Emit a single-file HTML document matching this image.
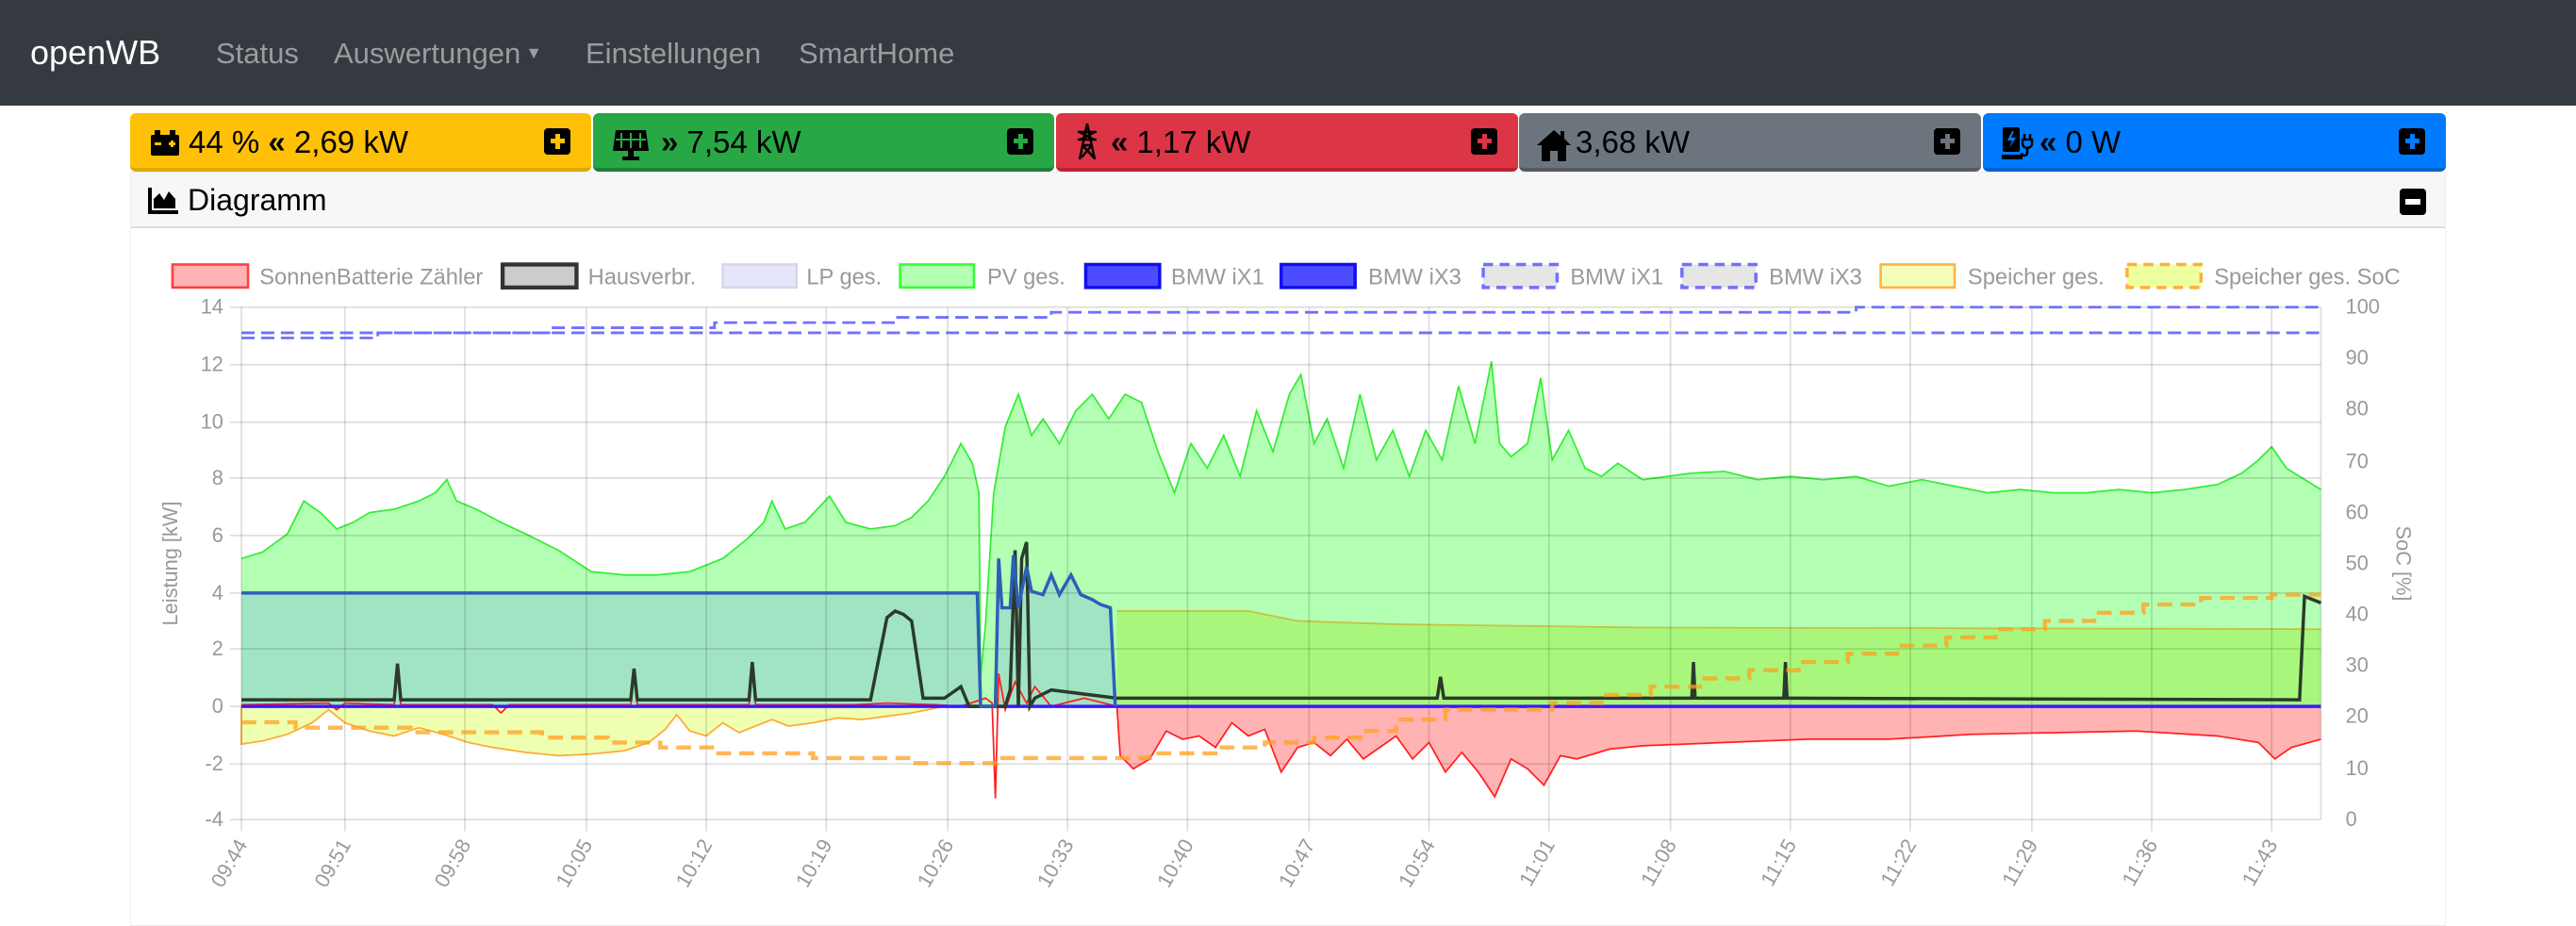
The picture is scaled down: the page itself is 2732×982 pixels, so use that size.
<!DOCTYPE html>
<html><head><meta charset="utf-8"><style>
*{margin:0;padding:0;box-sizing:border-box}
body{width:2732px;height:970px;background:#fff;font-family:"Liberation Sans",sans-serif;position:relative;overflow:hidden}
.nav{position:absolute;left:0;top:0;width:2732px;height:112px;background:#343a40}
.brand{position:absolute;left:32px;top:35px;color:#fff;font-size:36px}
.nl{position:absolute;top:39px;color:#9a9da0;font-size:31px}
.box{position:absolute;top:120px;height:62px;border-radius:6px;font-size:33px;color:#000;}
.box .t{position:absolute;left:62px;top:12px;white-space:nowrap}
.box .ic{position:absolute;left:20px;top:16px}
.box .pl{position:absolute;right:22px;top:16px;width:28px;height:28px;background:#000;border-radius:4px}
.pl:before{content:"";position:absolute;left:12px;top:6px;width:5px;height:16px;background:var(--c)}
.pl:after{content:"";position:absolute;left:7px;top:11px;width:15px;height:5px;background:var(--c)}
.card{position:absolute;left:138px;top:182px;width:2456px;height:800px;border:1px solid #eee}
.hdr{position:absolute;left:0;top:0;width:100%;height:59px;background:#f7f7f9;border-bottom:2px solid #ddd}
.hdr .t{position:absolute;left:60px;top:11px;font-size:32px;color:#000}
</style></head><body>
<div class="nav">
<div class="brand">openWB</div>
<div class="nl" style="left:229px">Status</div>
<div class="nl" style="left:354px">Auswertungen<span style="font-size:18px;vertical-align:5px"> ▼</span></div>
<div class="nl" style="left:621px">Einstellungen</div>
<div class="nl" style="left:847px">SmartHome</div>
</div>

<div class="box" style="left:138px;width:489px;background:#ffc107;border-bottom:4px solid #e0a800">
<svg class="ic" width="34" height="30" viewBox="0 0 34 30"><rect x="2" y="7" width="30" height="22" rx="2"/><rect x="6" y="2" width="6" height="6"/><rect x="22" y="2" width="6" height="6"/><rect x="6" y="15" width="7" height="3" fill="#ffc107"/><rect x="21" y="15" width="7" height="3" fill="#ffc107"/><rect x="23" y="13" width="3" height="7" fill="#ffc107"/></svg>
<div class="t">44 % <b>«</b> 2,69 kW</div><div class="pl" style="--c:#ffc107"></div></div>

<div class="box" style="left:629px;width:489px;background:#28a745;border-bottom:4px solid #1e7e34">
<svg class="ic" width="40" height="36" viewBox="0 0 40 36"><path d="M4 2h32l3 22H1z"/><path d="M10 5v16M20 5v16M30 5v16M4 12h32" stroke="#28a745" stroke-width="2"/><rect x="17" y="24" width="6" height="6"/><rect x="11" y="30" width="18" height="4"/></svg>
<div class="t" style="left:72px"><b>»</b> 7,54 kW</div><div class="pl" style="--c:#28a745"></div></div>

<div class="box" style="left:1120px;width:490px;background:#dc3545;border-bottom:4px solid #bd2130">
<svg class="ic" width="26" height="40" viewBox="0 0 26 40" style="top:10px"><path d="M13 1L5 39M13 1l8 38M3 10h20M3 18h20M7 24h12M5 10l15 8M21 10L6 18M8 24l12 13M18 24L7 37" stroke="#000" stroke-width="2.5" fill="none"/></svg>
<div class="t" style="left:58px"><b>«</b> 1,17 kW</div><div class="pl" style="--c:#dc3545"></div></div>

<div class="box" style="left:1611px;width:490px;background:#6c757d;border-bottom:4px solid #545b62">
<svg class="ic" width="38" height="36" viewBox="0 0 38 36" style="left:18px"><path d="M19 2L1 18h5v17h9V24h8v11h9V18h5L30 11V3h-4v5z"/></svg>
<div class="t" style="left:60px">3,68 kW</div><div class="pl" style="--c:#6c757d"></div></div>

<div class="box" style="left:2103px;width:491px;background:#007bff;border-bottom:4px solid #0062cc">
<svg class="ic" width="36" height="36" viewBox="0 0 36 36" style="left:20px;top:14px"><rect x="1" y="1" width="18" height="26" rx="2"/><rect x="0" y="30" width="22" height="5"/><path d="M11 5l-5 10h5l-3 8 7-11h-5l3-7z" fill="#007bff"/><path d="M24 8v6M30 8v6M22 14h10v4a5 5 0 0 1-10 0zM27 22v6a3 3 0 0 1-6 0" stroke="#000" stroke-width="2.5" fill="none"/></svg>
<div class="t" style="left:60px"><b>«</b> 0 W</div><div class="pl" style="--c:#007bff"></div></div>

<div class="card">
<div class="hdr">
<svg style="position:absolute;left:18px;top:16px" width="32" height="28" viewBox="0 0 32 28"><path d="M0 0h4v24h28v4H0z"/><path d="M6 22V12l6-6 5 7 5-9 7 8v10z"/></svg>
<div class="t">Diagramm</div>
<div style="position:absolute;right:20px;top:17px;width:28px;height:28px;background:#000;border-radius:4px"><div style="position:absolute;left:6px;top:11px;width:16px;height:6px;background:#fff"></div></div>
</div>
</div>

<svg style="position:absolute;left:0;top:0" width="2732" height="970" viewBox="0 0 1568.3 556.8" font-family="Liberation Sans, sans-serif">
<polygon fill="#b3ffb3" points="147,430 147,340 160,336 175,325 185,305 195,312 205,322 215,318 225,312 240,310 255,305 265,300 272,292 278,305 290,310 305,318 320,325 340,335 360,348 380,350 400,350 420,348 440,340 455,328 465,318 470,305 478,322 490,318 505,302 515,318 530,322 545,320 555,315 565,305 575,290 585,270 592,282 596,300 597,412 600,380 605,300 612,260 620,240 628,265 635,255 645,270 655,250 665,240 675,255 685,240 695,245 705,275 715,300 725,270 735,285 745,265 755,290 765,250 775,275 785,240 792,228 800,270 808,255 818,285 828,240 838,280 848,262 858,290 868,262 878,280 888,235 898,270 908,220 913,270 920,278 930,270 938,230 945,280 955,262 965,285 975,290 985,282 1000,292 1015,290 1030,288 1050,287 1070,292 1090,290 1110,292 1130,290 1150,296 1170,292 1190,296 1210,300 1230,298 1250,300 1270,300 1290,298 1310,300 1330,298 1350,295 1365,288 1375,280 1383,272 1392,285 1400,290 1413,298 1413,430"/>
<polyline fill="none" stroke="#33ee33" stroke-width="1" points="147,340 160,336 175,325 185,305 195,312 205,322 215,318 225,312 240,310 255,305 265,300 272,292 278,305 290,310 305,318 320,325 340,335 360,348 380,350 400,350 420,348 440,340 455,328 465,318 470,305 478,322 490,318 505,302 515,318 530,322 545,320 555,315 565,305 575,290 585,270 592,282 596,300 597,412 600,380 605,300 612,260 620,240 628,265 635,255 645,270 655,250 665,240 675,255 685,240 695,245 705,275 715,300 725,270 735,285 745,265 755,290 765,250 775,275 785,240 792,228 800,270 808,255 818,285 828,240 838,280 848,262 858,290 868,262 878,280 888,235 898,270 908,220 913,270 920,278 930,270 938,230 945,280 955,262 965,285 975,290 985,282 1000,292 1015,290 1030,288 1050,287 1070,292 1090,290 1110,292 1130,290 1150,296 1170,292 1190,296 1210,300 1230,298 1250,300 1270,300 1290,298 1310,300 1330,298 1350,295 1365,288 1375,280 1383,272 1392,285 1400,290 1413,298"/>
<polygon fill="#a1e4c4" points="147,430 147,361 595,361 597,430 606,430 608,340 610,370 615,370 617,338 620,370 625,345 628,360 635,362 640,350 645,362 652,350 658,362 665,365 670,368 676,370 679,430"/>
<polygon fill="#a8f77c" points="680,430 680,372 760,372 790,378 850,380 1000,382 1413,383 1413,430"/>
<polyline fill="none" stroke="#c8c040" stroke-width="1" points="680,372 760,372 790,378 850,380 1000,382 1413,383"/>
<polygon fill="#eeffb0" stroke="#ffaa33" stroke-width="1" points="147,430 147,453 160,451 175,447 190,440 200,432 210,440 225,445 240,448 255,443 270,447 285,452 300,455 320,458 340,460 360,459 380,457 395,452 405,444 412,435 420,445 430,448 440,440 450,446 460,442 470,438 480,442 495,440 510,437 525,438 540,436 555,434 570,431 575,430"/>
<polygon fill="#ffb3b3" points="680,430 682,460 690,468 700,462 710,445 720,450 730,448 740,455 750,440 760,448 770,444 780,470 790,455 800,452 810,460 820,450 830,462 840,455 850,448 860,462 870,452 880,470 890,458 900,470 910,485 920,462 930,468 940,478 950,460 960,462 980,456 1000,454 1050,452 1100,450 1150,450 1200,447 1250,446 1300,445 1350,448 1375,452 1385,462 1395,455 1413,450 1413,430"/>
<g stroke="rgba(0,0,0,0.13)" stroke-width="1">
<path d="M140 187H1413M140 222H1413M140 257H1413M140 291H1413M140 326H1413M140 361H1413M140 395H1413M140 430H1413M140 465H1413M140 499H1413"/>
<path d="M147 187V506M210 187V506M283 187V506M357 187V506M430 187V506M503 187V506M577 187V506M650 187V506M723 187V506M797 187V506M870 187V506M943 187V506M1017 187V506M1090 187V506M1163 187V506M1237 187V506M1310 187V506M1383 187V506M1413 187V499"/>
</g>
<polyline fill="none" stroke="#ff2020" stroke-width="1" points="147,429 200,428 205,432 210,428 240,429 242,404 244,429 300,429 305,434 310,429 384,429 386,407 388,429 456,429 458,403 460,429 520,429 540,428 570,429 585,430 600,425 604,428 606,486 608,410 612,432 618,415 625,428 630,418 640,430 660,425 680,430 682,460 690,468 700,462 710,445 720,450 730,448 740,455 750,440 760,448 770,444 780,470 790,455 800,452 810,460 820,450 830,462 840,455 850,448 860,462 870,452 880,470 890,458 900,470 910,485 920,462 930,468 940,478 950,460 960,462 980,456 1000,454 1050,452 1100,450 1150,450 1200,447 1250,446 1300,445 1350,448 1375,452 1385,462 1395,455 1413,450"/>
<line x1="147" y1="430" x2="1413" y2="430" stroke="#3a1aff" stroke-width="2"/>
<polyline fill="none" stroke="#2b3a2b" stroke-width="2" points="147,426 240,426 242,404 244,426 384,426 386,407 388,426 456,426 458,403 460,426 530,426 540,376 545,372 550,374 555,378 562,425 575,425 585,418 590,430 612,430 615,420 618,335 620,430 622,340 625,330 627,430 630,425 640,420 680,425 875,425 877,412 879,425 1030,425 1031,403 1032,425 1086,425 1087,403 1088,425 1400,426 1403,363 1413,367"/>
<polyline fill="none" stroke="#2c5fb8" stroke-width="2" points="147,361 595,361 597,430 606,430 608,340 610,370 615,370 617,338 620,370 625,345 628,360 635,362 640,350 645,362 652,350 658,362 665,365 670,368 676,370 679,430"/>
<g fill="none" stroke="#7070ff" stroke-width="1.6" stroke-dasharray="8 4">
<path d="M147 202.6H335V199.5H435V196.4H545V193.2H640V190.1H1130V187H1413"/>
<path d="M147 205.7H230V202.6H1413"/>
</g>
<path fill="none" stroke="rgba(255,160,30,0.75)" stroke-width="2.5" stroke-dasharray="9 5" d="M147 439.7H180V443H250V445.8H330V449H370V452H402V455H435V458.6H495V461.5H555V464.6H607V461.5H700V458.6H740V455H770V452H800V449H830V445H850V438H880V432H945V428H975V423H1005V418H1035V413H1065V408H1095V403H1125V398H1155V393H1185V388H1215V383H1245V378H1275V373H1305V368H1340V364H1383V362H1413"/>
<g fill="#999" font-size="12.5" text-anchor="end">
<text x="136" y="191">14</text><text x="136" y="226">12</text><text x="136" y="261">10</text><text x="136" y="295">8</text><text x="136" y="330">6</text><text x="136" y="365">4</text><text x="136" y="399">2</text><text x="136" y="434">0</text><text x="136" y="469">-2</text><text x="136" y="503">-4</text>
</g>
<g fill="#999" font-size="12.5">
<text x="1428" y="191">100</text><text x="1428" y="222">90</text><text x="1428" y="253">80</text><text x="1428" y="285">70</text><text x="1428" y="316">60</text><text x="1428" y="347">50</text><text x="1428" y="378">40</text><text x="1428" y="409">30</text><text x="1428" y="440">20</text><text x="1428" y="472">10</text><text x="1428" y="503">0</text>
</g>
<text transform="translate(108,343) rotate(-90)" fill="#999" font-size="12.5" text-anchor="middle">Leistung [kW]</text>
<text transform="translate(1459,343) rotate(90)" fill="#999" font-size="12.5" text-anchor="middle">SoC [%]</text>
<g fill="#999" font-size="12.5" text-anchor="end">
<text transform="translate(151,514) rotate(-60)">09:44</text><text transform="translate(214,514) rotate(-60)">09:51</text><text transform="translate(287,514) rotate(-60)">09:58</text><text transform="translate(361,514) rotate(-60)">10:05</text><text transform="translate(434,514) rotate(-60)">10:12</text><text transform="translate(507,514) rotate(-60)">10:19</text><text transform="translate(581,514) rotate(-60)">10:26</text><text transform="translate(654,514) rotate(-60)">10:33</text><text transform="translate(727,514) rotate(-60)">10:40</text><text transform="translate(801,514) rotate(-60)">10:47</text><text transform="translate(874,514) rotate(-60)">10:54</text><text transform="translate(947,514) rotate(-60)">11:01</text><text transform="translate(1021,514) rotate(-60)">11:08</text><text transform="translate(1094,514) rotate(-60)">11:15</text><text transform="translate(1167,514) rotate(-60)">11:22</text><text transform="translate(1241,514) rotate(-60)">11:29</text><text transform="translate(1314,514) rotate(-60)">11:36</text><text transform="translate(1387,514) rotate(-60)">11:43</text>
</g>
<g font-size="13.6" fill="#999">
<rect x="105" y="161" width="46" height="14" fill="#ffb3b3" stroke="#ff4040" stroke-width="1.5"/><text x="158" y="173">SonnenBatterie Zähler</text>
<rect x="306" y="161" width="45" height="14" fill="#ccc" stroke="#333" stroke-width="2.5"/><text x="358" y="173">Hausverbr.</text>
<rect x="440" y="161" width="45" height="14" fill="#e6e6fa" stroke="#d6d6ee" stroke-width="1.5"/><text x="491" y="173">LP ges.</text>
<rect x="548" y="161" width="45" height="14" fill="#b3ffb3" stroke="#33ff33" stroke-width="1.5"/><text x="601" y="173">PV ges.</text>
<rect x="661" y="161" width="45" height="14" fill="#4d4dff" stroke="#1010ee" stroke-width="2"/><text x="713" y="173">BMW iX1</text>
<rect x="780" y="161" width="45" height="14" fill="#4d4dff" stroke="#1010ee" stroke-width="2"/><text x="833" y="173">BMW iX3</text>
<rect x="903" y="161" width="45" height="14" fill="#e6e6e6" stroke="#7070ff" stroke-width="2" stroke-dasharray="6 4"/><text x="956" y="173">BMW iX1</text>
<rect x="1024" y="161" width="45" height="14" fill="#e6e6e6" stroke="#7070ff" stroke-width="2" stroke-dasharray="6 4"/><text x="1077" y="173">BMW iX3</text>
<rect x="1145" y="161" width="45" height="14" fill="#f3ffb8" stroke="#ffb347" stroke-width="1.5"/><text x="1198" y="173">Speicher ges.</text>
<rect x="1295" y="161" width="45" height="14" fill="#eeffa0" stroke="#ffb030" stroke-width="2" stroke-dasharray="6 4"/><text x="1348" y="173">Speicher ges. SoC</text>
</g>
</svg>
</body></html>
